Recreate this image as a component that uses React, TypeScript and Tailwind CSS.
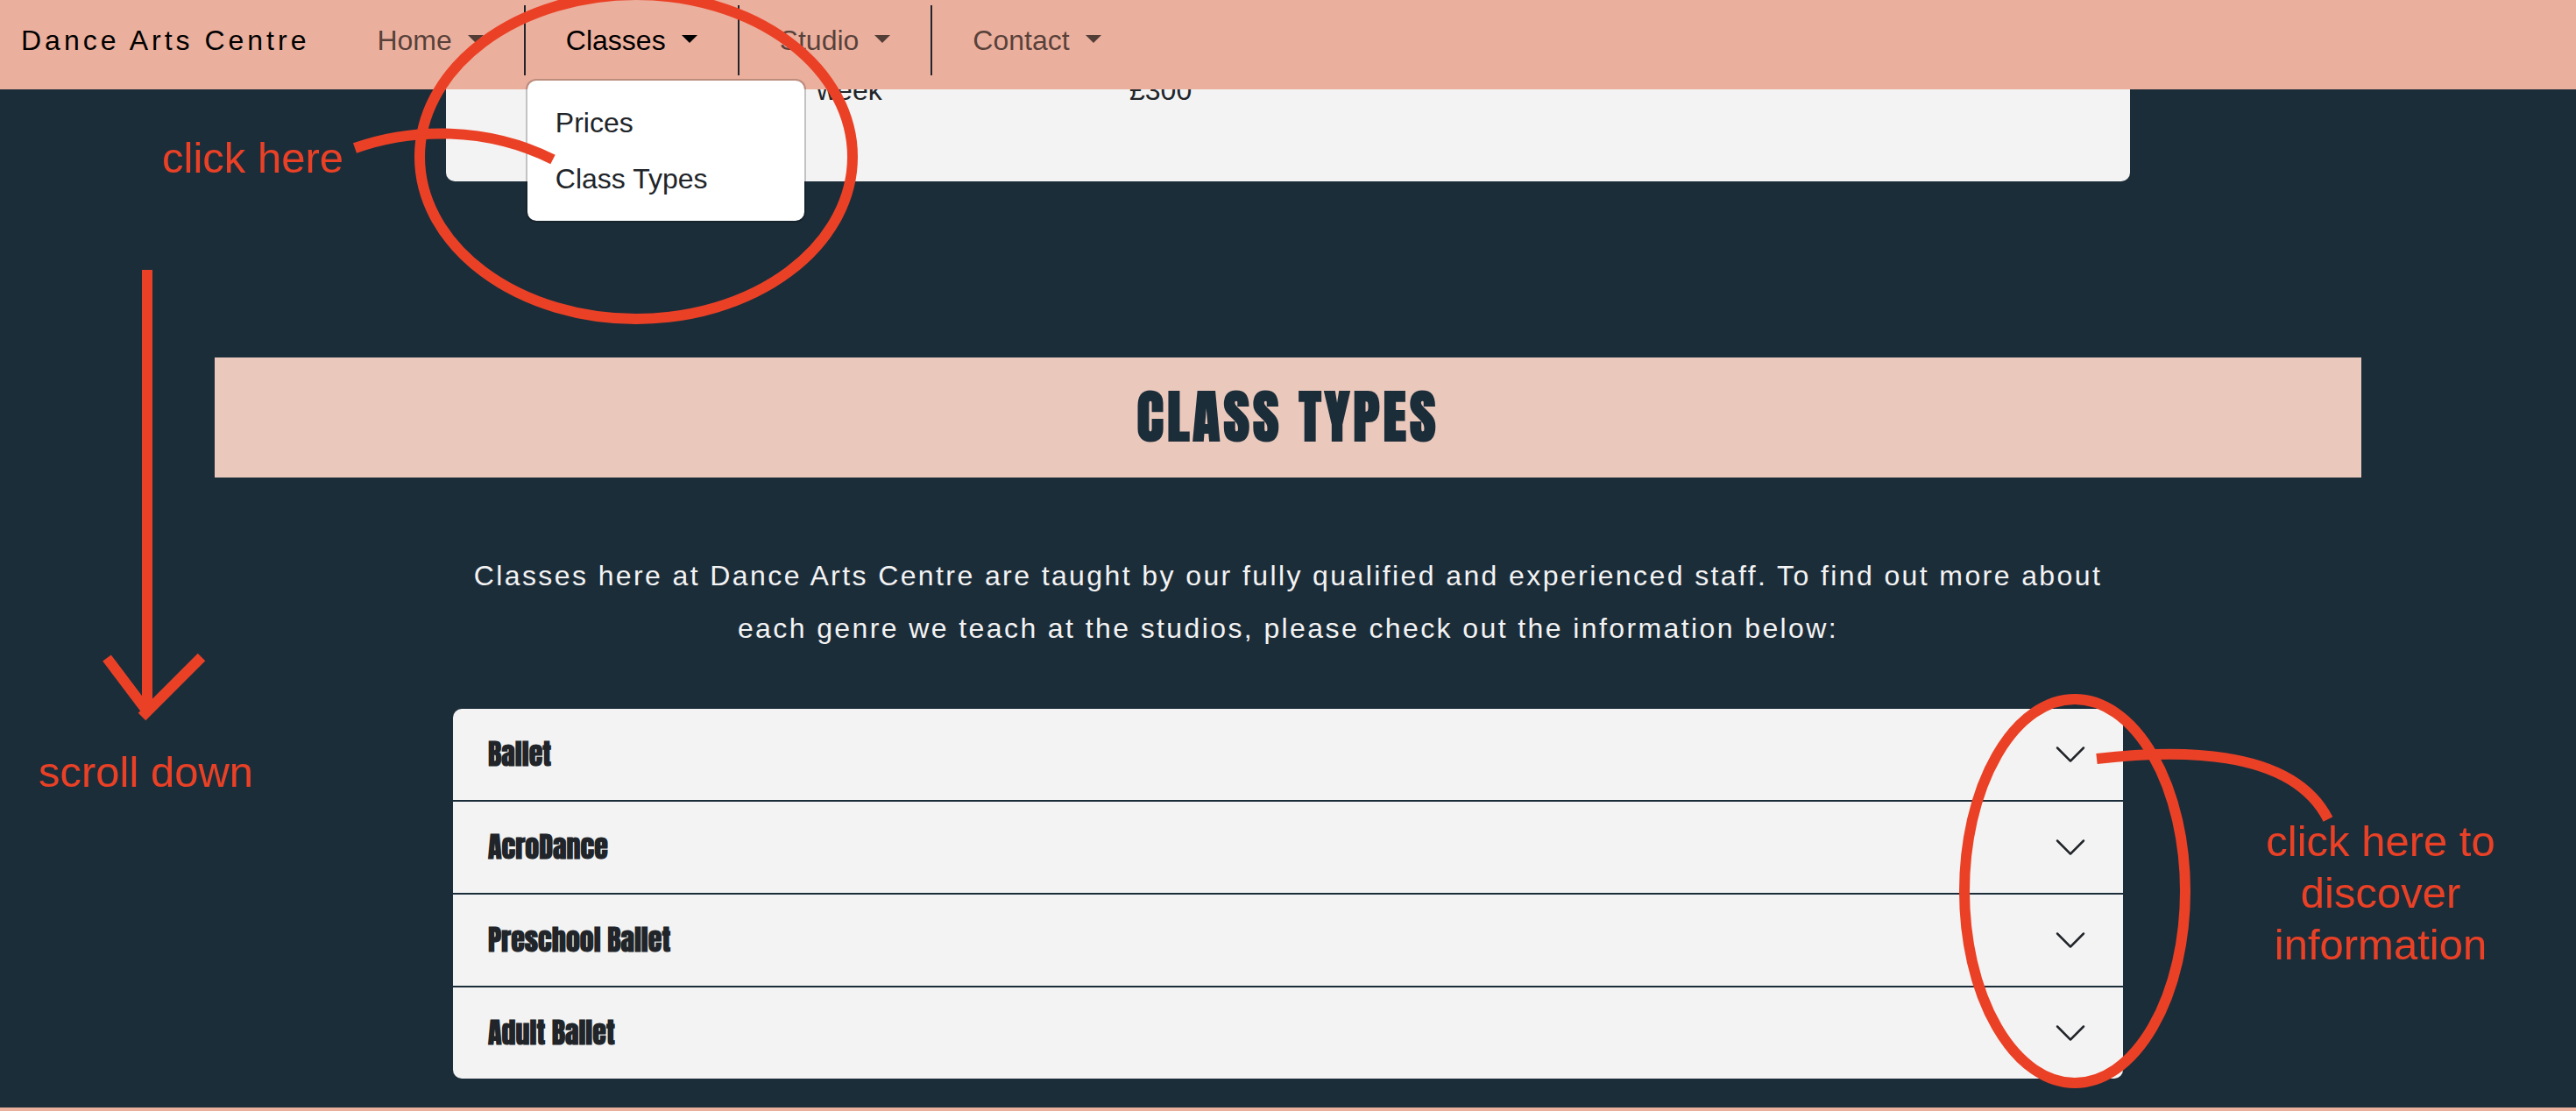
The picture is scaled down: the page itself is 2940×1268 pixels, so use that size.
import React from "react";

const navItems = ["Home", "Classes", "Studio", "Contact"];
const menuItems = ["Prices", "Class Types"];
const classTypes = ["Ballet", "AcroDance", "Preschool Ballet", "Adult Ballet"];

function Caret() {
  return (
    <svg className="ml-[18px] mb-1 h-[9px] w-[18px]" viewBox="0 0 18 9" fill="currentColor" aria-hidden="true">
      <path d="M0 0H18L9 9Z" />
    </svg>
  );
}

function Chevron() {
  return (
    <svg className="size-10" viewBox="0 0 16 16" fill="#212529" aria-hidden="true">
      <path
        fillRule="evenodd"
        d="M1.646 4.646a.5.5 0 0 1 .708 0L8 10.293l5.646-5.647a.5.5 0 0 1 .708.708l-6 6a.5.5 0 0 1-.708 0l-6-6a.5.5 0 0 1 0-.708z"
      />
    </svg>
  );
}

function NavBar() {
  return (
    <nav className="relative z-10 flex items-center bg-[#ebaf9d] pt-1.5 pb-4 pl-6">
      <a href="#home" className="mr-[31px] tracking-[4px] text-black">
        Dance Arts Centre
      </a>
      <ul className="flex">
        {navItems.map((name) => (
          <li key={name} className="relative border-r-2 border-[#212529] last:border-r-0">
            <button
              className={
                name === "Classes"
                  ? "flex items-center px-[46px] py-4 text-black"
                  : "flex items-center px-[46px] py-4 text-black/65"
              }
            >
              {name}
              <Caret />
            </button>
            {name === "Classes" && (
              <ul className="absolute top-[84px] left-0 w-80 rounded-[12px] border-2 border-black/20 bg-white bg-clip-padding py-4 text-[#212529]">
                {menuItems.map((item) => (
                  <li key={item}>
                    <a href="#classes" className="block px-8 py-2">
                      {item}
                    </a>
                  </li>
                ))}
              </ul>
            )}
          </li>
        ))}
      </ul>
    </nav>
  );
}

function Annotations() {
  return (
    <div className="pointer-events-none absolute inset-0 z-20 text-[49px] leading-[59px] text-[#ea4126]">
      <svg className="absolute inset-0 h-full w-full" viewBox="0 0 2940 1268" fill="none" stroke="#ea4126" strokeWidth="12" aria-hidden="true">
        <ellipse cx="726" cy="179" rx="247" ry="185" />
        <path d="M405 169C470 146 555 144 631 182" />
        <path d="M168 308V806" />
        <path d="M122 751L168 812" />
        <path d="M230 750L162 818" />
        <ellipse cx="2368" cy="1017" rx="126" ry="219" />
        <path d="M2393 866C2480 856 2615 852 2657 935" />
      </svg>
      <p className="absolute top-[151px] left-[185px]">click here</p>
      <p className="absolute top-[852px] left-11">scroll down</p>
      <p className="absolute top-[931px] right-[73px] w-[300px] text-center">click here to discover information</p>
    </div>
  );
}

export default function App() {
  return (
    <div className="relative min-h-screen overflow-hidden bg-[#1c2d3a] font-['Liberation_Sans',Arial,sans-serif] text-[32px] leading-[48px]">
      <NavBar />
      <main>
        <section className="mx-auto -mt-[23px] w-2/3 px-[19px]">
          <div className="rounded-b-[10px] bg-[#f3f3f3] pb-20 text-[#212529]">
            <table className="w-full table-fixed">
              <tbody>
                <tr>
                  <td className="w-[780px] pl-[423px]">week</td>
                  <td>£300</td>
                </tr>
              </tbody>
            </table>
          </div>
        </section>
        <section className="mt-[201px]">
          <h1 className="mx-auto w-5/6 bg-[#ebc8bc] py-8 text-center font-[Anton,Impact,sans-serif] text-[64px] leading-[73px] font-bold tracking-[4px] text-[#1c2d3a]">
            CLASS TYPES
          </h1>
          <div className="mx-auto w-2/3 px-[27px]">
            <p className="mt-[82px] mb-[62px] text-center leading-[60px] tracking-[0.075em] text-[#f3f3f3]">
              Classes here at Dance Arts Centre are taught by our fully qualified and experienced staff. To find out more about each genre we teach at the studios, please check out the information below:
            </p>
            <ul className="divide-y-2 divide-[#1c2d3a] overflow-hidden rounded-[10px] bg-[#f3f3f3]">
              {classTypes.map((name) => (
                <li key={name}>
                  <button className="flex h-[104px] w-full items-center justify-between px-10 font-[Anton,Impact,sans-serif] font-bold text-[#212529]">
                    {name}
                    <Chevron />
                  </button>
                </li>
              ))}
            </ul>
          </div>
        </section>
      </main>
      <footer className="mt-[33px] h-1 bg-[#ebaf9d]" />
      <Annotations />
    </div>
  );
}
